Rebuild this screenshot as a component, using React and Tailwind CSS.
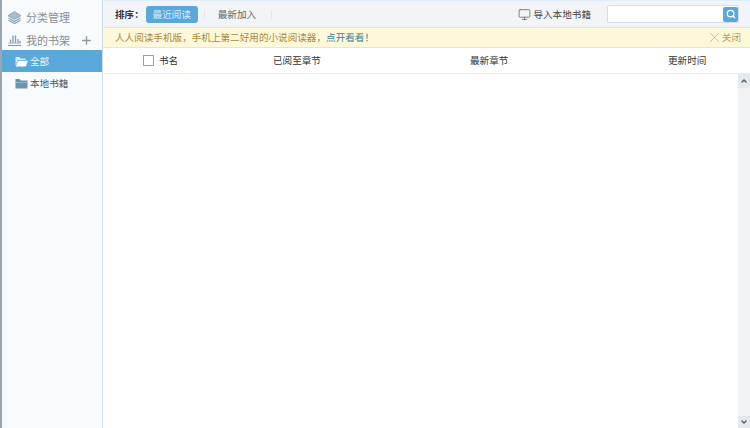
import { Search, X, Plus, Monitor, ChevronUp } from "lucide-react";

const cjk = "font-['Noto_Sans_CJK_SC',sans-serif]";

function LayersIcon() {
  return (
    <svg width="15" height="14" viewBox="0 0 16 15" className="shrink-0">
      <path d="M8 .5 15 5 8 9 1 5Z" fill="#a9bccb" stroke="#7f98ab" strokeWidth="0.8" />
      <path d="M1.5 7.5 8 11.3l6.5-3.8" fill="none" stroke="#8aa2b4" strokeWidth="1.2" />
      <path d="M1.5 9.8 8 13.5l6.5-3.7" fill="none" stroke="#8aa2b4" strokeWidth="1.2" />
    </svg>
  );
}

function ShelfIcon() {
  return (
    <svg width="15" height="11" viewBox="0 0 15 11" className="shrink-0">
      <path d="M1 10.5h13" stroke="#7d95a8" strokeWidth="1" />
      <path d="M3.5 8V4.5M6 8V.5M8.5 8V.5M11 8V4M13 8V6" stroke="#8aa2b4" strokeWidth="1.4" />
      <path d="M1 8.4h13" stroke="#a9bccb" strokeWidth="0.8" />
    </svg>
  );
}

function FolderIcon({ open }) {
  if (open) {
    return (
      <svg width="13" height="11" viewBox="0 0 13 11" className="shrink-0">
        <path d="M.5 10V1h4l1 1.5h5V4H3L.5 10Z" fill="#d5e8f5" />
        <path d="M3.3 4.8H13L10.8 10.5H.8Z" fill="#ffffff" />
      </svg>
    );
  }
  return (
    <svg width="13" height="11" viewBox="0 0 13 11" className="shrink-0">
      <path d="M.5 10.5V1h4.3l1 1.5h6.7v8Z" fill="#6d94ae" />
      <path d="M.5 4h12v1H.5Z" fill="#92b3c9" />
    </svg>
  );
}

function SidebarItem({ open, active, label }) {
  return (
    <div className={`flex h-[22px] items-center gap-[2px] pl-[13px] text-[9.6px] ${active ? "bg-[#5aa7da] text-[#e8f4fc]" : "text-[#4d5358]"}`}>
      <FolderIcon open={open} />
      <span>{label}</span>
    </div>
  );
}

export default function App() {
  return (
    <div className={`flex h-[428px] w-[750px] overflow-hidden bg-white ${cjk}`}>
      <aside className="flex w-[103px] shrink-0 flex-col border-l-2 border-r border-l-[#9aa7b0] border-r-[#cfdde8] bg-[#f8fbfd]">
        <div className="flex h-[30px] items-end gap-[4px] pb-[5px] pl-[5px] text-[11px] text-[#8a8f93]">
          <LayersIcon />
          <span>分类管理</span>
        </div>
        <div className="flex h-[20px] items-center pl-[5px] pr-[9px] text-[11px] text-[#868b8f]">
          <ShelfIcon />
          <span className="ml-[4px]">我的书架</span>
          <Plus className="ml-auto h-[13px] w-[13px] text-[#8b9aa5]" strokeWidth={2.5} />
        </div>
        <SidebarItem open active label="全部" />
        <SidebarItem label="本地书籍" />
      </aside>

      <main className="flex min-w-0 flex-1 flex-col">
        <div className="flex h-[27px] shrink-0 items-center border-t border-[#dff0fa] bg-[#f3f4f8] pl-[12px] text-[9.6px] text-[#333]">
          <span className="font-bold">排序：</span>
          <span className="ml-[2px] flex h-[17px] w-[52px] items-center justify-center rounded-[3px] bg-[#5aa7da] text-[#d7ecfa]">最近阅读</span>
          <span className="ml-[6px] h-[9px] w-px bg-[#e2e4e8]" />
          <span className="ml-[13px] text-[#666]">最新加入</span>
          <span className="ml-[15px] h-[9px] w-px bg-[#e2e4e8]" />
          <Monitor className="ml-auto h-[13px] w-[13px] text-[#555]" strokeWidth={1.3} />
          <span className="ml-[2px] text-[#444]">导入本地书籍</span>
          <div className="ml-[16px] mr-[11px] flex h-[18px] w-[132px] items-center justify-end rounded-[2px] border border-[#d6dde6] bg-white">
            <span className="flex h-[15px] w-[15px] items-center justify-center rounded-[2px] bg-[#5aa7da]">
              <Search className="h-[10px] w-[10px] text-white" strokeWidth={3} />
            </span>
          </div>
        </div>

        <div className="flex h-[21px] shrink-0 items-center border-y border-[#efe6bd] bg-[#fdf8d9] pl-[12px] pr-[9px] text-[9.6px] text-[#a8893f]">
          <span>人人阅读手机版，手机上第二好用的小说阅读器，</span>
          <span className="text-[#3f7d96]">点开看看！</span>
          <X className="ml-auto h-[17px] w-[17px] text-[#b9a878]" strokeWidth={1} />
          <span className="ml-[-1px] text-[#b3a060]">关闭</span>
        </div>

        <div className="flex h-[26px] shrink-0 items-center border-b border-[#e8ecef] text-[9.6px] text-[#333]">
          <span className="ml-[40px] h-[11px] w-[11px] border border-[#8fa3b3] bg-white" />
          <span className="ml-[5px] w-[114px]">书名</span>
          <span className="w-[197px]">已阅至章节</span>
          <span className="w-[198px]">最新章节</span>
          <span>更新时间</span>
        </div>

        <div className="flex min-h-0 flex-1 justify-end">
          <div className="flex w-[12px] flex-col justify-between bg-[#f1f3f5]">
            <span className="flex h-[14px] items-center justify-center bg-[#e4e9ed]">
              <ChevronUp className="h-[8px] w-[8px] text-[#556]" strokeWidth={4} />
            </span>
            <span className="flex h-[12px] items-center justify-center bg-[#e4e9ed]">
              <ChevronUp className="h-[8px] w-[8px] rotate-180 text-[#556]" strokeWidth={4} />
            </span>
          </div>
        </div>
      </main>
    </div>
  );
}
